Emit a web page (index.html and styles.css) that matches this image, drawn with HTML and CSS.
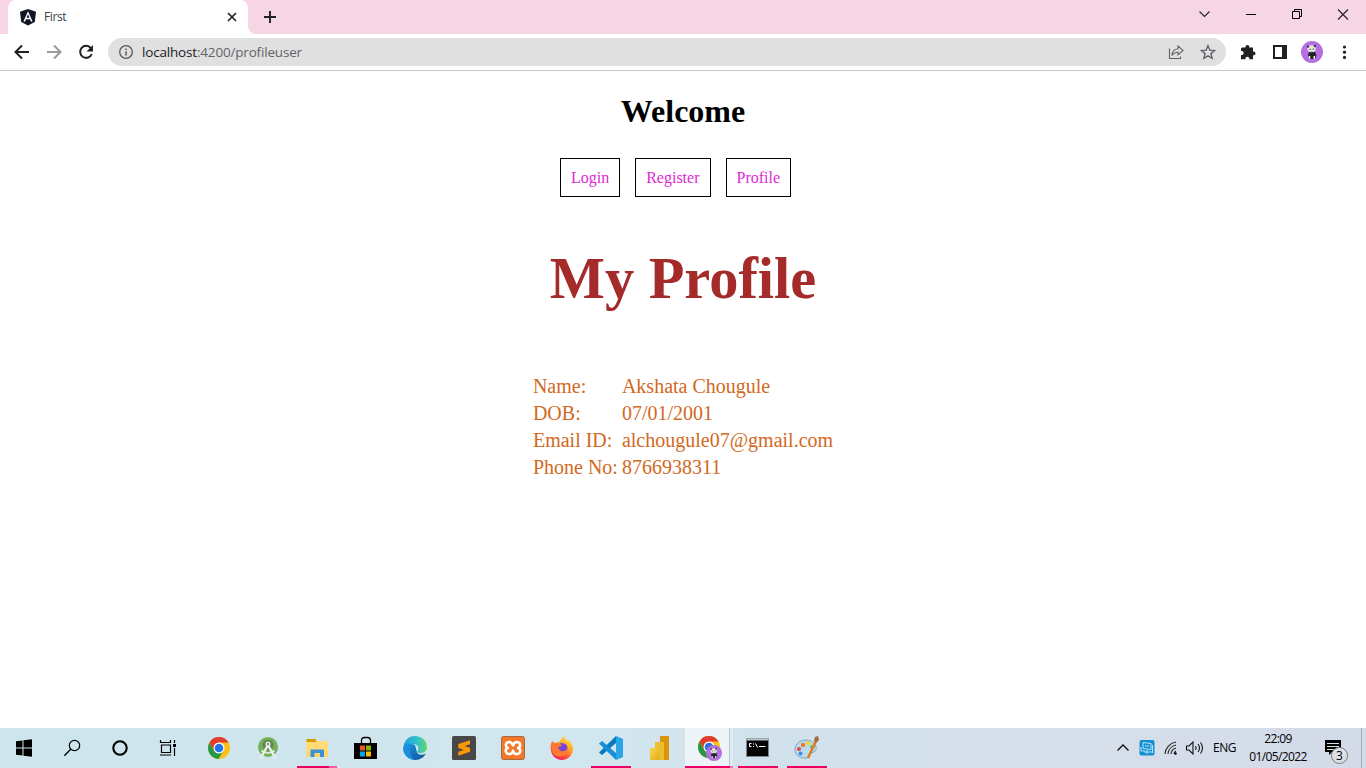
FILE: index.html
```html
<!DOCTYPE html>
<html lang="en">
<head>
<meta charset="utf-8">
<title>First</title>
<link rel="stylesheet" href="styles.css">
</head>
<body>
<svg width="0" height="0" class="defs">
  <defs>
    <symbol id="chrome" viewBox="0 0 24 24">
      <circle cx="12" cy="12" r="11" fill="#fbc116"/>
      <path d="M2.500 6.500A11 11 0 0 0 11.400 23L16.700 14.700 12 12 7.300 14.700z" fill="#279847"/>
      <path d="M2.500 6.500A11 11 0 0 1 21.600 6.600H12L7.300 14.700z" fill="#e33b2e"/>
      <circle cx="12" cy="12" r="5.500" fill="#fff"/>
      <circle cx="12" cy="12" r="4.300" fill="#2672e8"/>
    </symbol>
    <symbol id="panda" viewBox="0 0 22 22">
      <circle cx="11" cy="11" r="11" fill="#b56fe0"/>
      <path d="M8 10.500h6l1.300 4-.8 3.500H8l-1-3.500z" fill="#20232b"/>
      <ellipse cx="10.600" cy="7.800" rx="4.200" ry="3.500" fill="#e9e9e2"/>
      <circle cx="7" cy="5.600" r="1.200" fill="#3a3b44"/>
      <circle cx="13.900" cy="5" r="1.200" fill="#3a3b44"/>
      <path d="M8 8.500l1.700-1v1.400zM13.500 8.200l-1.700-1v1.500zM10.200 10h1.400l-.7.700z" fill="#24262d"/>
      <path d="M7.700 15h1.600v3H7.700zM12.500 15h1.600v3h-1.600z" fill="#eee"/>
    </symbol>
    <linearGradient id="edgeA" x1="0" y1="0" x2="1" y2="1"><stop offset="0" stop-color="#1c9ee0"/><stop offset="1" stop-color="#124f9c"/></linearGradient>
    <linearGradient id="edgeB" x1="0" y1="0" x2="1" y2="0"><stop offset="0" stop-color="#229fe3"/><stop offset=".65" stop-color="#36c3c6"/><stop offset="1" stop-color="#66d857"/></linearGradient>
    <linearGradient id="fox" x1=".8" y1="0" x2=".2" y2="1"><stop offset="0" stop-color="#ffe83d"/><stop offset=".45" stop-color="#ff9a25"/><stop offset=".75" stop-color="#ff423e"/><stop offset="1" stop-color="#e41575"/></linearGradient>
    <linearGradient id="bi" x1="0" y1="0" x2="1" y2="1"><stop offset="0" stop-color="#f6d751"/><stop offset="1" stop-color="#e3ad1b"/></linearGradient>
  </defs>
</svg>

<header class="browser">
  <div class="tabstrip">
    <div class="tab">
      <svg class="favicon" width="16" height="18" viewBox="0 0 16 18"><path d="M8 1 16 3.800l-1.200 10.300L8 17.500 1.200 14.100 0 3.800z" fill="#101722"/><path d="M8 3.200 3.400 13.400h1.700l.9-2.200h4l.9 2.200h1.700zM8 6.300l1.400 3.500H6.600z" fill="#fff"/></svg>
      <span class="tab-title">First</span>
      <svg class="tab-close" width="10" height="10" viewBox="0 0 10 10"><path d="M1 1l8 8M9 1 1 9" stroke="#202124" stroke-width="1.700"/></svg>
    </div>
    <svg class="tab-foot" width="8" height="34" viewBox="0 0 8 34"><path d="M0 26a8 8 0 0 0 8 8H0z" fill="#fff"/></svg>
    <svg class="new-tab" width="12" height="12" viewBox="0 0 12 12"><path d="M6 0v12M0 6h12" stroke="#202124" stroke-width="1.900"/></svg>
    <div class="window-controls">
      <svg width="46" height="30"><path d="M17.500 11.500l5 5 5-5" fill="none" stroke="#222" stroke-width="1.100"/></svg>
      <svg width="46" height="30"><path d="M18 14.500h10" stroke="#000"/></svg>
      <svg width="46" height="30"><path d="M18.500 11.500h7v7h-7zM20.500 11.500v-2h7v7h-2" fill="none" stroke="#000"/></svg>
      <svg width="46" height="30"><path d="M18 9.500l10 10M28 9.500l-10 10" stroke="#222" stroke-width="1.100"/></svg>
    </div>
  </div>
  <div class="toolbar">
    <svg class="tool" width="32" height="36" viewBox="0 0 32 36"><path d="M23 18H10M16 11.500 9.500 18l6.500 6.500" fill="none" stroke="#202124" stroke-width="2"/></svg>
    <svg class="tool" width="32" height="36" viewBox="0 0 32 36"><path d="M9 18h13M16 11.500l6.500 6.500-6.500 6.500" fill="none" stroke="#9a9b9d" stroke-width="2"/></svg>
    <svg class="tool" width="32" height="36" viewBox="0 0 32 36"><path d="M20.800 14A6 6 0 1 0 21.800 20" fill="none" stroke="#202124" stroke-width="2"/><path d="M23 11v6.500h-6.500z" fill="#202124"/></svg>
    <div class="omnibox">
      <svg width="14" height="14" viewBox="0 0 14 14"><circle cx="7" cy="7" r="6.300" fill="none" stroke="#55585c" stroke-width="1.300"/><path d="M7 6.200v4.300M7 3.500v1.500" stroke="#55585c" stroke-width="1.500"/></svg>
      <span class="url"><b>localhost</b>:4200/profileuser</span>
      <svg class="share" width="16" height="16" viewBox="0 0 16 16"><path d="M1.500 4.500v10h11V12.500" fill="none" stroke="#5f6368" stroke-width="1.100"/><path d="M4 11.500C4.300 7.500 6.500 5 10 4.700V2l5 4.400-5 4.400V8.200C7 8.300 5.200 9.500 4 11.500z" fill="none" stroke="#5f6368" stroke-width="1.100"/></svg>
      <svg class="star" width="16" height="16" viewBox="0 0 16 16"><path d="M8 1.700l1.800 4.400 4.800.4-3.700 3.100 1.200 4.700L8 11.800l-4.100 2.500 1.200-4.700-3.700-3.100 4.800-.4z" fill="none" stroke="#5f6368" stroke-width="1.400"/></svg>
    </div>
    <div class="actions">
      <svg width="32" height="36" viewBox="0 0 32 36"><path d="M10 13.500h3.500v-.7a1.900 1.900 0 0 1 3.800 0v.7H21v4h.6a1.900 1.900 0 0 1 0 3.800H21v4h-3.600v-.6a2 2 0 0 0-4 0v.6H9v-4.400h.8a1.900 1.900 0 0 0 0-3.800H9v-2.600z" fill="#202124"/></svg>
      <svg width="32" height="36" viewBox="0 0 32 36"><path d="M10 12h12v12H10z" fill="none" stroke="#202124" stroke-width="2"/><path d="M18 11h5v14h-5z" fill="#202124"/></svg>
      <svg width="32" height="36" viewBox="0 0 32 36"><use href="#panda" x="5" y="7" width="22" height="22"/></svg>
      <svg width="32" height="36" viewBox="0 0 32 36"><g fill="#202124"><circle cx="16.500" cy="13" r="1.600"/><circle cx="16.500" cy="18.200" r="1.600"/><circle cx="16.500" cy="23.400" r="1.600"/></g></svg>
    </div>
  </div>
</header>

<main class="page">
  <h1 class="welcome">Welcome</h1>
  <nav class="links"><a>Login</a><a>Register</a><a>Profile</a></nav>
  <h1 class="heading">My Profile</h1>
  <table class="profile">
    <tr><td>Name:</td><td>Akshata Chougule</td></tr>
    <tr><td>DOB:</td><td>07/01/2001</td></tr>
    <tr><td>Email ID:</td><td>alchougule07@gmail.com</td></tr>
    <tr><td>Phone No:</td><td>8766938311</td></tr>
  </table>
</main>

<footer class="taskbar">
  <div class="system">
    <svg width="48" height="40"><path d="M16 13.200l6.500-.8v7.100H16zM23.500 12.300l8.500-1v8.200h-8.500zM16 20.500h6.500v7.100l-6.500-.8zM23.500 20.500H32v8.200l-8.500-1z"/></svg>
    <svg width="48" height="40"><circle cx="26.500" cy="17.500" r="5.200" fill="none" stroke="#000" stroke-width="1.200"/><path d="M22.700 21.300 16.300 27.700" stroke="#000" stroke-width="1.400"/></svg>
    <svg width="48" height="40"><circle cx="24" cy="20" r="6.700" fill="none" stroke="#000" stroke-width="2.100"/></svg>
    <svg width="48" height="40"><path d="M16.500 12v2.500h10V12M17.500 17h9v7.500h-9zM16.500 27.500V27h10v.500M30.500 12v3M30.500 20v8" fill="none" stroke="#000" stroke-width="1.200"/><path d="M29 16h3v3h-3z"/></svg>
  </div>
  <div class="apps">
    <div class="app"><svg width="24" height="24"><use href="#chrome" width="24" height="24"/></svg></div>
    <div class="app"><svg width="24" height="24" viewBox="0 0 24 24"><circle cx="12" cy="11" r="10" fill="#75b158"/><circle cx="12" cy="9" r="5.500" fill="#5f8a53"/><path d="M12 9 4.800 22M12 9l7.200 13" stroke="#eceeed" stroke-width="2.500"/><path d="M5.500 14.500q6.500 5 13 0" fill="none" stroke="#e6ebe5" stroke-width="1.600"/><circle cx="12" cy="8" r="2.500" fill="#e6ebe5"/><circle cx="12" cy="8" r="1" fill="#56764c"/></svg></div>
    <div class="app running stacked"><svg width="24" height="24" viewBox="0 0 24 24"><path d="M1.500 3h9l2 2h10.500v16H1.500z" fill="#ffd667"/><path d="M1.500 3h9l1 3h-10z" fill="#d79b0d"/><path d="M1.500 7h9l2-2h10.500v10H1.500z" fill="#ffdc75"/><path d="M5.500 13.500H19V21h-4v-4H9.500v4h-4z" fill="#3e91d4"/></svg></div>
    <div class="app"><svg width="24" height="24" viewBox="0 0 24 24"><path d="M7.500 7V4.500q0-3 3-3h3q3 0 3 3V7" fill="none" stroke="#000" stroke-width="1.300"/><path d="M0 7h23v16H0z" fill="#000"/><path d="M6 9.500h5v5H6z" fill="#f25022"/><path d="M12 9.500h5v5h-5z" fill="#7fba00"/><path d="M6 15.500h5v5H6z" fill="#00a4ef"/><path d="M12 15.500h5v5h-5z" fill="#ffb900"/></svg></div>
    <div class="app"><svg width="24" height="24" viewBox="0 0 24 24"><path d="M.2 12A12 12 0 0 0 12 23.900c5 .2 9-2.600 10.800-6.400-4 2.500-9 1.300-9.300-3L12 9 6 7z" fill="url(#edgeA)"/><path d="M.3 11C1.500 3 7 0 12 0c7 0 12 5 12 11 0 4-3 6-6.500 6-3 0-4-1.200-2.500-3 1.500-3-1-6-5-6S2 8.500.3 11z" fill="url(#edgeB)"/><path d="M.2 12C1 7.500 6 6.500 9.500 8.500 5.500 11 6 20 12 23.900 5 23.900 0 18 .2 12z" fill="#1b8fdc"/></svg></div>
    <div class="app"><svg width="24" height="24" viewBox="0 0 24 24"><rect width="24" height="24" rx="1.500" fill="#484848"/><path d="M6.300 8 18 4.300v4L12.500 10l5.500 1.800v4L6.300 19.800v-4l5.500-1.900L6.300 12z" fill="#ff9800"/></svg></div>
    <div class="app"><svg width="24" height="24" viewBox="0 0 24 24"><rect x=".5" y=".5" width="23" height="23" rx="2" fill="#f2792a" stroke="#a9693f"/><path d="M8.300 6C4 6 4 11 7 12c-3.500 1-3 6 1.500 6 3 0 3-2.500 3.500-3.500.5 1 .5 3.500 3.500 3.500 4.500 0 5-5 1.500-6 3-1 3-6-1.300-6C12.500 6 13 9 12 9.500 11 9 11.500 6 8.300 6z" fill="none" stroke="#fff" stroke-width="2.500" stroke-linejoin="round"/></svg></div>
    <div class="app"><svg width="24" height="24" viewBox="0 0 24 24"><path d="M2 5l3 2 4-1 5-6q1 3 4 5l1-1q4 5 4 9a11 10.500 0 0 1-22 1Q0 9 2 5z" fill="url(#fox)"/><circle cx="12" cy="12.500" r="5.500" fill="#7545d9"/><path d="M1 10q3-4 7-3l4 2q-1 2-4 2 1 5 6 4 3-1 3-4 2 5-2 8-6 4-12-1z" fill="#ff7a30"/></svg></div>
    <div class="app running"><svg width="24" height="24" viewBox="0 0 24 24"><path d="M17 0 24 3v18l-7 3z" fill="#2aa4e9"/><path d="M17 0v7L3 19 0 16.500z" fill="#0879bd"/><path d="M17 24v-7L3 5 0 7.500z" fill="#168fd5"/></svg></div>
    <div class="app"><svg width="24" height="24" viewBox="0 0 24 24"><path d="M12 0h8q1 0 1 1v23h-9z" fill="#d7940c"/><path d="M7 6h8q1 0 1 1v17H7z" fill="#edbd2d"/><path d="M2 12h8q1 0 1 1v11H2z" fill="url(#bi)"/></svg></div>
    <div class="app running stacked active"><svg width="26" height="26" viewBox="0 0 26 26"><use href="#chrome" x="1" width="24" height="24"/><use href="#panda" x="10" y="10" width="16" height="16"/></svg></div>
    <div class="app running"><svg width="24" height="24" viewBox="0 0 24 24"><path d="M.5 2.500h22v18H.5z" fill="#050505" stroke="#7c858a"/><path d="M.5 2.500h22v2H.5z" fill="#bfc6ca"/><path d="M5.500 7.500h-2v3h2M7.500 7.500v1M7.500 10v1M9.500 7.500l2 4M13 10.500h6.500" fill="none" stroke="#fff"/></svg></div>
    <div class="app running"><svg width="26" height="24" viewBox="0 0 26 24"><path d="M12 4C5 4 1 9 1 14s5 9 12 8c3-1 1-4 4-5s6-2 5-6-5-7-10-7z" fill="#b9dced" stroke="#75a5c2"/><circle cx="9" cy="9" r="2.200" fill="#ef7932"/><circle cx="14" cy="7" r="2.200" fill="#f2cf3b"/><circle cx="5" cy="13" r="2" fill="#e54545"/><circle cx="6.500" cy="17.500" r="2" fill="#448bdd"/><circle cx="18" cy="11" r="2" fill="#62bb54"/><path d="M14 22 22 5" stroke="#e47b20" stroke-width="2.500"/><path d="M20 5 21 1l3-1 1 4-3 3z" fill="#a56b38"/></svg></div>
  </div>
  <div class="tray">
    <svg width="24" height="40"><path d="M6.500 22.500 12 17l5.500 5.500" fill="none" stroke="#111" stroke-width="1.400"/></svg>
    <svg width="24" height="40"><rect x="4.500" y="12" width="15" height="15.500" rx="2" fill="#168ed3"/><path d="M8 14.500l8 1v6l-8-1zM9 24h8M17.500 17v8M10 18h4M6 19v4h4M12 22v4" fill="none" stroke="#b2e9f7" stroke-width="1"/></svg>
    <svg width="24" height="40"><path d="M6 26A13 13 0 0 1 17 14M9 26a10 10 0 0 1 8-9M12 26a7 7 0 0 1 5-6M15 26q0-2 2-3" fill="none" stroke="#222" stroke-width="1.100"/><circle cx="16.500" cy="25.500" r="1.200"/></svg>
    <svg width="25" height="40"><path d="M3.500 18h2.500l4-4v12l-4-4H3.500z" fill="none" stroke="#111" stroke-width="1.100"/><path d="M12.500 18q1.500 2 0 4M15 16q3 4 0 8M17.500 14.500q4 5.500 0 11" fill="none" stroke="#111" stroke-width="1.100"/></svg>
    <span class="lang">ENG</span>
    <div class="clock"><span>22:09</span><span>01/05/2022</span></div>
    <div class="notice"><svg width="46" height="40"><path d="M10 12h16v12H17l-3 3v-3h-4z"/><path d="M12 15.500h12M12 18.500h12M12 21.500h8" stroke="#d8deea"/></svg><span class="badge">3</span></div>
  </div>
</footer>
</body>
</html>
```
FILE: styles.css
```css
* { box-sizing: border-box; }
body {
  margin: 0;
  height: 768px;
  display: flex;
  flex-direction: column;
  overflow: hidden;
  background: #fff;
  font-family: "Liberation Serif", "Times New Roman", serif;
}
svg { display: block; flex: none; }
.defs { position: absolute; }

.browser { flex: none; font-family: "Open Sans", "Noto Sans", sans-serif; border-bottom: 1px solid #c9c9cb; }
.tabstrip { height: 34px; background: #f6d5e4; display: flex; align-items: center; padding-left: 8px; }
.tab { width: 240px; height: 34px; display: flex; align-items: center; padding: 0 11px 0 12px; background: #fff; border-radius: 8px 8px 0 0; }
.tab-title { margin-left: 8px; font-size: 12px; line-height: 16px; padding-bottom: 1px; letter-spacing: -0.4px; color: #3c4043; }
.tab-close { margin-left: auto; }
.new-tab { margin-left: 8px; }
.window-controls { margin-left: auto; height: 34px; display: flex; }
.toolbar { height: 36px; display: flex; align-items: center; padding-left: 6px; }
.tool:nth-child(3) { margin-right: 6px; }
.omnibox { width: 1118px; height: 28px; border-radius: 14px; background: #e0e0e0; display: flex; align-items: center; padding: 0 10px 0 11px; }
.url { margin-left: 9px; font-size: 13.5px; letter-spacing: -0.18px; color: #606468; }
.url b { font-weight: 400; color: #202124; }
.share { margin-left: auto; }
.star { margin-left: 16px; }
.actions { display: flex; margin-left: 6px; }

.page { flex: 1; text-align: center; }
.welcome { margin: 22px 0 28px; font-size: 32px; line-height: 37px; }
.links { display: flex; justify-content: center; font-size: 16px; line-height: 17px; }
.links a { padding: 10px; margin-right: 15px; border: 1px solid #000; color: #e028d5; }
.heading { margin: 48px 0 59px; font-size: 58.4px; line-height: 68px; color: brown; }
.profile { margin: 0 auto; font-size: 20px; line-height: 23px; text-align: left; color: chocolate; }

.taskbar {
  flex: none;
  height: 40px;
  display: flex;
  background: linear-gradient(90deg, #cde5ed 0%, #d2e6ee 45%, #d2e0eb 62%, #d7dfeb 80%, #d3dae8 100%);
  font-family: "Open Sans", "Noto Sans", sans-serif;
}
.system { display: flex; }
.apps { display: flex; margin-left: 2px; }
.app { width: 49px; height: 40px; display: flex; align-items: center; justify-content: center; }
.running { background: linear-gradient(#ed0066, #ed0066) 50% 100% / 40px 2px no-repeat; }
.stacked { background: linear-gradient(90deg, #ed0066 80%, #f35e9d 80%) 50% 100% / 40px 2px no-repeat; }
.active {
  background: linear-gradient(90deg, #ed0066 94%, #f278aa 94%) 1px 100% / 48px 2px no-repeat,
    linear-gradient(90deg, transparent 1px, #edf4f8 1px, #edf4f8 45px, #b8c8d2 45px, #b8c8d2 46px, #dfebf1 46px);
}
.tray { margin-left: auto; display: flex; align-items: center; border-right: 1px solid #9daab9; margin-right: 4px; font-size: 12px; color: #000; }
.lang { width: 33px; text-align: center; letter-spacing: -0.5px; padding-bottom: 1px; }
.clock { width: 74px; display: flex; flex-direction: column; align-items: center; line-height: 18px; letter-spacing: -0.6px; padding-bottom: 1px; }
.notice { position: relative; }
.badge { position: absolute; left: 16px; top: 19px; width: 17px; height: 17px; border: 1px solid #777; border-radius: 50%; background: #dce0e6; text-align: center; font-size: 12px; line-height: 15px; }
```
